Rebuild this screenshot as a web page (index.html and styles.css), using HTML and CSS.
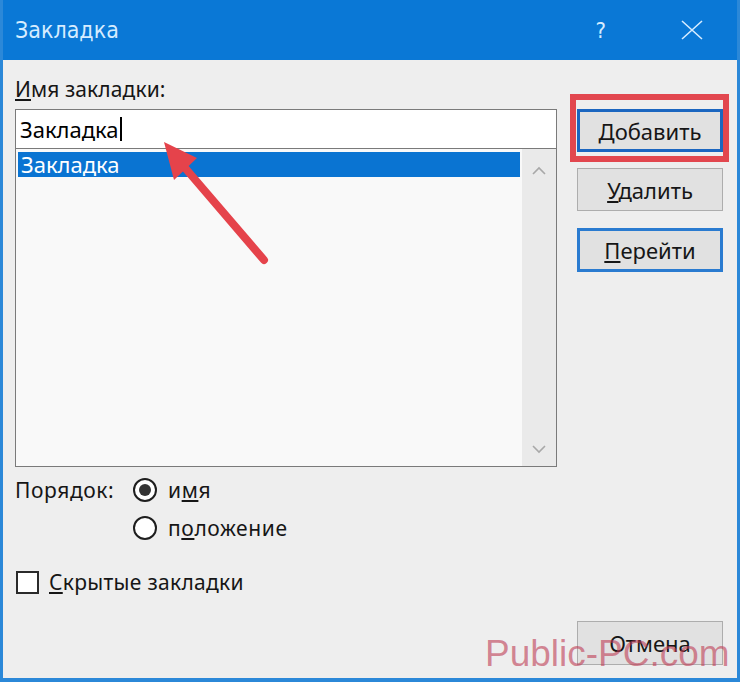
FILE: index.html
```html
<!DOCTYPE html>
<html lang="ru">

<head>
    <meta charset="UTF-8">
    <title>Закладка</title>
    <link rel="stylesheet" href="styles.css">
</head>

<body>
    <div class="window">
        <div class="titlebar">
            <span class="title">Закладка</span>
            <span class="help">?</span>
            <svg class="close" width="22" height="20" viewBox="0 0 22 20">
                <path d="M1 1 L21 19 M21 1 L1 19" stroke="#d6ecff" stroke-width="1.6" fill="none" />
            </svg>
        </div>

        <div class="content">
            <div class="left">
                <div class="name-label"><u>И</u>мя закладки:</div>
                <div class="name-input">Закладка<span class="caret"></span></div>
                <div class="list">
                    <div class="list-items">
                        <div class="item selected">Закладка</div>
                    </div>
                    <div class="scrollbar">
                        <svg width="14" height="10" viewBox="0 0 14 10">
                            <path d="M1 8 L7 2 L13 8" stroke="#a8a8a8" stroke-width="1.6" fill="none" />
                        </svg>
                        <svg width="14" height="10" viewBox="0 0 14 10">
                            <path d="M1 2 L7 8 L13 2" stroke="#a8a8a8" stroke-width="1.6" fill="none" />
                        </svg>
                    </div>
                </div>

                <div class="order">
                    <span class="order-label">Порядок:</span>
                    <div class="radios">
                        <div class="radio-row"><span class="radio checked"></span><span>и<u>м</u>я</span></div>
                        <div class="radio-row"><span class="radio"></span><span>п<u>о</u>ложение</span></div>
                    </div>
                </div>

                <div class="hidden-row"><span class="checkbox"></span><span><u>С</u>крытые закладки</span></div>
            </div>

            <div class="right">
                <!-- red frame is the screenshot's highlight -->
                <div class="marked">
                    <button class="btn btn-blue"><u>Д</u>обавить</button>
                </div>
                <button class="btn btn-delete"><u>У</u>далить</button>
                <button class="btn btn-blue btn-go"><u>П</u>ерейти</button>
                <button class="btn btn-cancel">Отмена</button>
            </div>
        </div>

        <!-- annotation arrow over the dialog -->
        <svg class="arrow" width="130" height="140" viewBox="150 130 130 140">
            <line x1="264" y1="260" x2="180" y2="162" stroke="#e5434b" stroke-width="8" stroke-linecap="round" />
            <polygon points="164,142 197,158 174,180" fill="#e5434b" />
        </svg>

        <div class="watermark">Public-PC.com</div>
    </div>
</body>

</html>
```

FILE: styles.css
```css
* {
    box-sizing: border-box;
}

body {
    margin: 0;
    background: #ffffff;
    font-family: "Noto Sans", "Open Sans", sans-serif;
    color: #161616;
}

.window {
    position: relative;
    width: 740px;
    height: 682px;
    display: flex;
    flex-direction: column;
    background: #eeeeee;
    border-left: 3px solid #2b88d8;
    border-right: 3px solid #2b88d8;
    border-bottom: 4px solid #2b88d8;
    overflow: hidden;
}

/* Title bar */

.titlebar {
    height: 60px;
    flex: none;
    display: flex;
    align-items: center;
    padding-left: 15px;
    margin: 0 -3px;
    background: #0a78d6;
    color: #d6ecff;
}

.title {
    flex: 1;
    font-family: "Liberation Sans Narrow", "DejaVu Sans Condensed", sans-serif;
    font-size: 23px;
}

.help {
    font-family: "DejaVu Sans Condensed", sans-serif;
    font-size: 22px;
    margin-right: 75px;
}

.close {
    margin-right: 37px;
}

/* Main area */

.content {
    flex: 1;
    display: flex;
    gap: 20px;
    padding: 14px 0 13px 12px;
}

.left {
    width: 542px;
    display: flex;
    flex-direction: column;
}

.name-label {
    font-size: 21px;
    line-height: 30px;
    margin-bottom: 5px;
    letter-spacing: 0.1px;
}

.name-input {
    height: 39px;
    display: flex;
    align-items: center;
    padding-left: 4px;
    background: #ffffff;
    border: 1px solid #7a7a7a;
    border-bottom: none;
    font-size: 22px;
    color: #000;
}

.caret {
    width: 2px;
    height: 24px;
    margin-left: 1px;
    background: #000;
}

.list {
    height: 319px;
    display: flex;
    gap: 2px;
    padding: 3px 0 0 2px;
    background: #f9f9f9;
    border: 1px solid #7a7a7a;
}

.list-items {
    flex: 1;
}

.item {
    height: 25px;
    line-height: 25px;
    padding-left: 3px;
    font-size: 22px;
}

.item.selected {
    background: #0a74d2;
    color: #ffffff;
}

.scrollbar {
    width: 34px;
    margin-top: -3px;
    display: flex;
    flex-direction: column;
    justify-content: space-between;
    align-items: center;
    padding: 17px 0 12px;
    background: #eaeaea;
}

/* Order radios */

.order {
    display: flex;
    margin-top: 4px;
    font-size: 21px;
    letter-spacing: 0.6px;
}

.order-label {
    width: 118px;
    line-height: 38px;
}

.radio-row {
    height: 38px;
    display: flex;
    align-items: center;
    gap: 11px;
}

.radio {
    width: 24px;
    height: 24px;
    border: 2px solid #1e1e1e;
    border-radius: 50%;
    background: #ffffff;
    display: flex;
    align-items: center;
    justify-content: center;
}

.radio.checked::after {
    content: "";
    width: 12px;
    height: 12px;
    border-radius: 50%;
    background: #333333;
}

.hidden-row {
    height: 30px;
    margin-top: 20px;
    display: flex;
    align-items: center;
    gap: 10px;
    padding-left: 1px;
    font-size: 21px;
    letter-spacing: 0.3px;
}

.checkbox {
    width: 23px;
    height: 23px;
    border: 2px solid #2a2a2a;
    background: #ffffff;
}

/* Buttons */

.right {
    width: 146px;
    display: flex;
    flex-direction: column;
    padding-top: 20px;
}

.marked {
    margin: 0 -6px 0 -7px;
    padding: 9px 1px 4px 1px;
    border: 6px solid #e2474f;
}

.btn {
    width: 146px;
    height: 43px;
    padding: 0;
    font-family: inherit;
    font-size: 22px;
    color: #161616;
    background: #e1e1e1;
    border: 1px solid #adadad;
}

.btn-blue {
    border: 3px solid #1b66c0;
}

.btn-delete {
    margin-top: 6px;
}

.btn-go {
    height: 44px;
    margin-top: 17px;
    border-color: #2a7bd0;
}

.btn-cancel {
    height: 44px;
    margin-top: auto;
}

/* Overlays */

.arrow {
    position: absolute;
    left: 147px;
    top: 130px;
}

.watermark {
    position: absolute;
    left: 482px;
    top: 633px;
    font-family: "Liberation Sans", Arial, sans-serif;
    font-size: 37px;
    color: rgba(190, 60, 84, 0.6);
}
```
